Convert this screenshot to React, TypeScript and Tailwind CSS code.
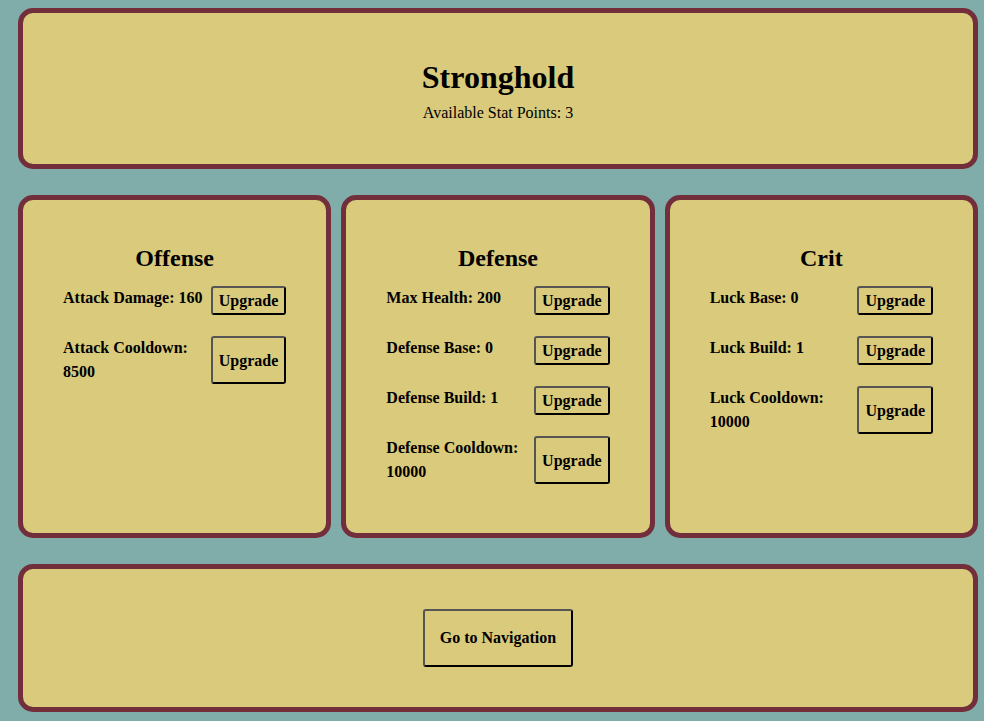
const panel = "rounded-[15px] border-[5px] border-[#722e3b] bg-[#d9ca7c]";

interface IStat {
  label: string;
  value: number;
}

const groups: Array<{ title: string; stats: IStat[] }> = [
  {
    title: "Offense",
    stats: [
      { label: "Attack Damage", value: 160 },
      { label: "Attack Cooldown", value: 8500 },
    ],
  },
  {
    title: "Defense",
    stats: [
      { label: "Max Health", value: 200 },
      { label: "Defense Base", value: 0 },
      { label: "Defense Build", value: 1 },
      { label: "Defense Cooldown", value: 10000 },
    ],
  },
  {
    title: "Crit",
    stats: [
      { label: "Luck Base", value: 0 },
      { label: "Luck Build", value: 1 },
      { label: "Luck Cooldown", value: 10000 },
    ],
  },
];

// outset border like a plain browser button
const btn =
  "rounded-[3px] border-2 border-t-[#555] border-l-[#555] border-r-black border-b-black bg-transparent font-bold text-black";

function StatGroup({ title, stats }: { title: string; stats: IStat[] }) {
  return (
    <div className={`${panel} pt-[44px] pb-[44px] px-10`}>
      <h2 className="text-center text-[24px] leading-[28px] font-bold mb-[14px]">{title}</h2>
      <div className="flex flex-col gap-[21px]">
        {stats.map((s) => (
          <div key={s.label} className="flex justify-between gap-1">
            <p className="text-base leading-6 font-bold">
              {s.label}: {s.value}
            </p>
            <button className={`${btn} shrink-0 px-[6px] py-[3px] text-base leading-[19px]`}>Upgrade</button>
          </div>
        ))}
      </div>
    </div>
  );
}

export default function App() {
  return (
    <div
      className="min-h-screen bg-[#80adaa] text-black pt-[8px] pb-[9px] pl-[18px] pr-[6px] flex flex-col gap-[26px]"
      style={{ fontFamily: '"Liberation Serif", "Times New Roman", serif' }}
    >
      <div className={`${panel} h-[161px] pt-[3px] flex flex-col items-center justify-center`}>
        <h1 className="text-[32px] leading-[37px] font-bold">Stronghold</h1>
        <p className="text-base leading-[18px] mt-[8px]">Available Stat Points: 3</p>
      </div>
      <div className="grid grid-cols-3 gap-[10px] h-[343px]">
        {groups.map((g) => (
          <StatGroup key={g.title} title={g.title} stats={g.stats} />
        ))}
      </div>
      <div className={`${panel} h-[148px] flex items-center justify-center`}>
        <button className={`${btn} px-[15px] py-[18px] text-base leading-[18px]`}>Go to Navigation</button>
      </div>
    </div>
  );
}
